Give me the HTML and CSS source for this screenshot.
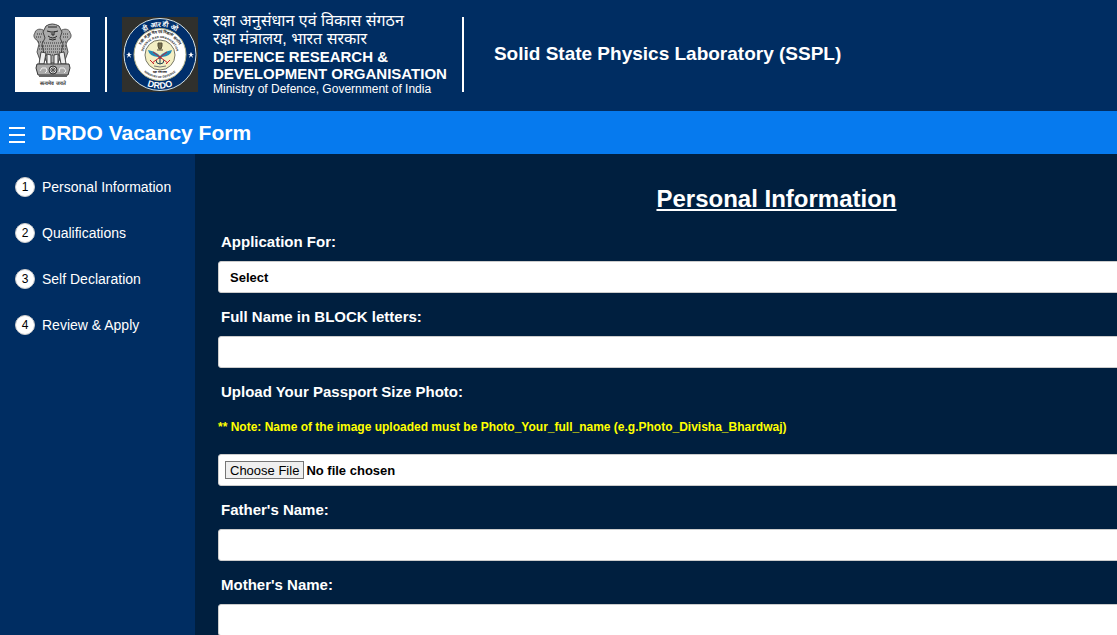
FILE: index.html
```html
<!DOCTYPE html>
<html lang="en">
  <head>
    <meta charset="utf-8" />
    <meta name="viewport" content="width=device-width, initial-scale=1" />
    <title>DRDO Vacancy Form</title>
    <link rel="stylesheet" href="styles.css">
  </head>

  <body>
    <header class="header">
      <svg class="emblem" viewBox="0 0 75 75" role="img" aria-label="National Emblem">
        <rect width="75" height="75" fill="#fff" />
        <!-- side lions -->
        <g fill="#aaa" stroke="#555" stroke-width="1">
          <path d="M28 13c-4-2-8 0-8 3-2 2-1 6 2 7l2 4-2 8 3 8h8V16z" />
          <path d="M47 13c4-2 8 0 8 3 2 2 1 6-2 7l-2 4 2 8-3 8h-8V16z" />
        </g>
        <!-- front lion -->
        <path d="M31 9q6-4 13 0l3 6-2 6 3 6-2 10-3 9h-11l-3-9-2-10 3-6-2-6z" fill="#aaa" stroke="#444" />
        <path d="M33 10h9M32 14l4 1M43 14l-4 1M37 14v4h2v-4M33 19q5 4 9 0M34 22q4 2 7 0" fill="none" stroke="#222" stroke-width="1" />
        <g fill="none" stroke="#333" stroke-width="1" stroke-dasharray="1 1">
          <path d="M22 17h6M21 20h6M23 25h6M24 29h27M24 32h27M26 35h23M29 26h18M31 38h13M48 17h6M48 20h6M46 25h6" />
        </g>
        <g fill="#eee" stroke="#444" stroke-width="1">
          <path d="M26 35l-2 12h5l2-11zM32 37v11h4V38zM39 38v10h4V37zM44 36l2 11h5l-2-12z" />
        </g>
        <!-- abacus and wheel -->
        <path d="M22 47h32l1 4-2 7H23l-2-7z" fill="#aaa" stroke="#333" />
        <circle cx="38" cy="53" r="4" fill="#ddd" stroke="#333" />
        <path d="M34 53h8M38 49v8M35 50l6 6M41 50l-6 6" stroke="#555" stroke-width="1" />
        <path d="M25 54l2-3h4l1 3-2 2M44 55l1-4h4l2 3-2 2" fill="none" stroke="#eee" stroke-width="1" />
        <path d="M24 58h28v2H24z" fill="#666" />
        <text class="emblem-motto" x="38" y="68">सत्यमेव जयते</text>
      </svg>
      <div class="divider"></div>
      <svg class="drdo-logo" viewBox="0 0 76 75" role="img" aria-label="DRDO">
        <defs>
          <path id="arc-top" d="M10 37.500A28 28 0 0 1 66 37.500" />
          <path id="arc-bottom" d="M4 37.500A34 34 0 0 0 72 37.500" />
          <path id="arc-hindi" d="M17 37A21 21 0 0 1 59 37" />
          <path id="arc-inner" d="M21 38A17 17 0 0 1 55 38" />
          <path id="arc-ministry" d="M14 37A24 24 0 0 0 62 37" />
        </defs>
        <rect width="76" height="75" fill="#30302c" />
        <circle cx="38" cy="37.500" r="36" fill="#002f6c" stroke="#d5e3e6" />
        <circle cx="38" cy="37.500" r="26" fill="#fff" stroke="#b9b68b" />
        <circle cx="38" cy="38" r="15" fill="#f4efc4" stroke="#776" />
        <text class="logo-top"><textPath href="#arc-top" startOffset="50%">डी आर डी ओ</textPath></text>
        <text class="logo-bottom"><textPath href="#arc-bottom" startOffset="50%">DRDO</textPath></text>
        <text class="logo-hindi"><textPath href="#arc-hindi" startOffset="50%">रक्षा अनुसंधान एवं विकास संगठन</textPath></text>
        <text class="logo-inner"><textPath href="#arc-inner" startOffset="50%">DEFENCE R&amp;D ORGANISATION</textPath></text>
        <text class="logo-inner"><textPath href="#arc-ministry" startOffset="50%">MINISTRY OF DEFENCE</textPath></text>
        <text class="logo-inner" x="38" y="56">रक्षा मंत्रालय</text>
        <g fill="#fff">
          <path d="M7 35l1 2h2l-2 1 1 3-2-2-2 2 1-3-2-1h2z" />
          <path d="M69 35l1 2h2l-2 1 1 3-2-2-2 2 1-3-2-1h2z" />
        </g>
        <!-- wings, swords and anchor -->
        <path d="M26 33q6 1 10 4l2 2 2-2q4-3 10-4-1 6-10 7h-4q-9-1-10-7z" fill="#2589b5" />
        <path d="M38 40v7M34 43q0 4 4 4t4-4M36 41h4" fill="none" stroke="#245" stroke-width="1" />
        <path d="M30 46l15-11M46 46L31 35" stroke="#c8202a" stroke-width="1" />
        <path d="M28 43l4 4M48 43l-4 4" stroke="#c8202a" stroke-width="1" />
        <path d="M36 26h4v3l-1 3h-2l-1-3zM35 33h6" fill="#776f4d" stroke="#554f39" stroke-width="1" />
        <path d="M32 49q6 2 12 0" fill="none" stroke="#777" stroke-width="1" />
      </svg>
      <div class="org-name">
        <p class="hindi" lang="hi">रक्षा अनुसंधान एवं विकास संगठन</p>
        <p class="hindi" lang="hi">रक्षा मंत्रालय, भारत सरकार</p>
        <p class="english">DEFENCE RESEARCH &amp;<br />DEVELOPMENT ORGANISATION</p>
        <p class="ministry">Ministry of Defence, Government of India</p>
      </div>
      <div class="divider"></div>
      <h1 class="lab-name">Solid State Physics Laboratory (SSPL)</h1>
    </header>

    <div class="navbar">
      <button class="menu-btn" type="button" aria-label="Menu">
        <svg viewBox="0 0 16 16" width="16" height="16">
          <path d="M0 1h16M0 8h16M0 15h16" stroke="#fff" stroke-width="2" />
        </svg>
      </button>
      <h2 class="navbar-title">DRDO Vacancy Form</h2>
    </div>

    <div class="layout">
      <nav class="sidebar">
        <a href="#personal"><span class="step">1</span>Personal Information</a>
        <a href="#qualifications"><span class="step">2</span>Qualifications</a>
        <a href="#declaration"><span class="step">3</span>Self Declaration</a>
        <a href="#review"><span class="step">4</span>Review &amp; Apply</a>
      </nav>

      <main class="content">
        <form class="form" id="personal">
          <h2 class="form-title">Personal Information</h2>

          <label for="application">Application For:</label>
          <select class="field" id="application">
            <option>Select</option>
          </select>

          <label for="fullname">Full Name in BLOCK letters:</label>
          <input class="field" type="text" id="fullname" />

          <label for="photo">Upload Your Passport Size Photo:</label>
          <p class="note">** Note: Name of the image uploaded must be Photo_Your_full_name (e.g.Photo_Divisha_Bhardwaj)</p>
          <input class="field file" type="file" id="photo" />

          <label for="father">Father's Name:</label>
          <input class="field" type="text" id="father" />

          <label for="mother">Mother's Name:</label>
          <input class="field" type="text" id="mother" />
        </form>
      </main>
    </div>
  </body>
</html>
```
FILE: styles.css
```css
* {
  box-sizing: border-box;
  margin: 0;
  padding: 0;
}

body {
  height: 100vh;
  display: flex;
  flex-direction: column;
  overflow: hidden;
  background: #001f3f;
  color: #fff;
  font-family: "Liberation Sans", Arial, sans-serif;
}

/* header */
.header {
  display: flex;
  align-items: center;
  flex-shrink: 0;
  gap: 15px;
  padding: 12px 15px 15px;
  background: #002d62;
}

.emblem {
  width: 75px;
  height: 75px;
}

.drdo-logo {
  width: 76px;
  height: 75px;
}

.emblem,
.drdo-logo,
.divider {
  flex-shrink: 0;
}

.emblem-motto {
  font-size: 5px;
  font-weight: bold;
  text-anchor: middle;
  fill: #333;
}

.drdo-logo text {
  text-anchor: middle;
  font-weight: bold;
}

.logo-top {
  font-size: 7px;
  fill: #fff;
}

.logo-bottom {
  font-size: 9px;
  fill: #fff;
}

.logo-hindi {
  font-size: 4px;
  fill: #222;
}

.logo-inner {
  font-size: 3px;
  fill: #222;
}

.divider {
  width: 2px;
  height: 75px;
  background: #fff;
}

.org-name {
  white-space: nowrap;
}

.hindi {
  font-family: "Liberation Sans", "Noto Sans", "Noto Sans Devanagari", sans-serif;
  font-size: 16px;
  line-height: 18px;
}

.english {
  font-size: 15px;
  font-weight: bold;
  line-height: 17px;
}

.ministry {
  font-size: 12px;
  line-height: 14px;
}

.lab-name {
  margin-left: 15px;
  font-size: 19px;
  white-space: nowrap;
}

/* blue bar */
.navbar {
  display: flex;
  align-items: center;
  flex-shrink: 0;
  gap: 16px;
  height: 43px;
  padding: 0 9px;
  background: #067aee;
}

.menu-btn {
  display: flex;
  padding-top: 4px;
  border: none;
  background: none;
  cursor: pointer;
}

.navbar-title {
  font-size: 21px;
}

/* sidebar */
.layout {
  display: flex;
  flex: 1;
  min-height: 0;
}

.sidebar {
  flex-shrink: 0;
  width: 195px;
  padding-top: 10px;
  background: #002d62;
}

.sidebar a {
  display: flex;
  align-items: center;
  gap: 7px;
  height: 46px;
  padding-left: 15px;
  color: #fff;
  font-size: 14px;
  text-decoration: none;
}

.step {
  display: flex;
  align-items: center;
  justify-content: center;
  width: 20px;
  height: 20px;
  border: 1px solid #ccc;
  border-radius: 50%;
  background: #fff;
  color: #000;
  font-size: 12px;
}

/* form */
.content {
  flex-shrink: 0;
  padding: 30px 23px;
}

.form {
  width: 100vw;
}

.form-title {
  margin-bottom: 19px;
  font-size: 24px;
  line-height: 30px;
  text-align: center;
  text-decoration: underline;
}

.form label {
  display: block;
  margin-bottom: 11px;
  padding-left: 3px;
  font-size: 15px;
  font-weight: bold;
  line-height: 17px;
}

.field {
  display: block;
  width: 100%;
  height: 32px;
  margin-bottom: 15px;
  padding: 0 11px;
  border: 1px solid #ccc;
  border-radius: 3px;
  background: #fff;
  color: #000;
  font-family: inherit;
  font-size: 13px;
  font-weight: bold;
  appearance: none;
}

.note {
  margin: 20px 0;
  color: #ff0;
  font-size: 12px;
  font-weight: bold;
  line-height: 14px;
}

.file {
  padding: 6px;
}

.file::file-selector-button {
  height: 18px;
  margin-right: 2px;
  padding: 0 4px;
  border: 1px solid #767676;
  background: #efefef;
  color: #000;
  font-family: inherit;
  font-size: 13px;
  font-weight: normal;
}
```
